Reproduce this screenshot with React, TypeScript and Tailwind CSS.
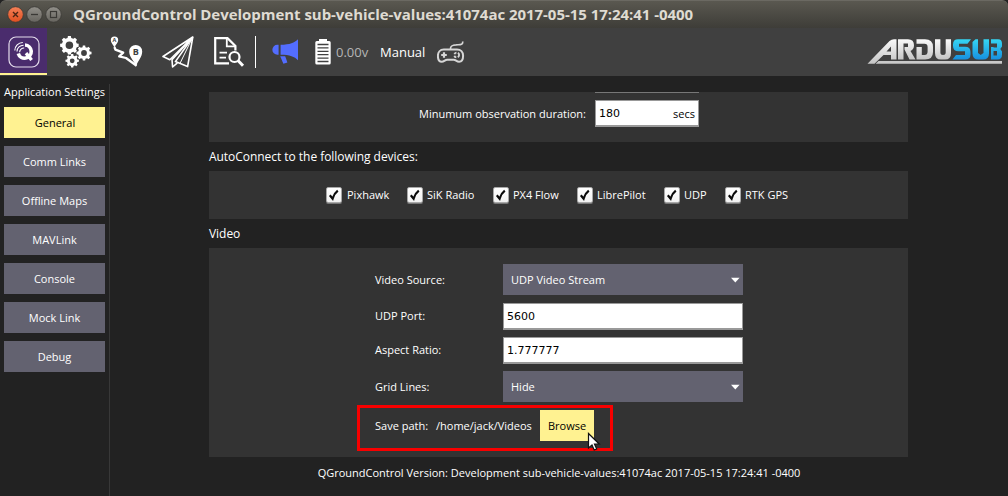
import React from "react";

const navItems = ["General", "Comm Links", "Offline Maps", "MAVLink", "Console", "Mock Link", "Debug"];

const devices = [
  { name: "Pixhawk", cls: "w-[81px] gap-[5px]" },
  { name: "SiK Radio", cls: "w-[86px] gap-1" },
  { name: "PX4 Flow", cls: "w-[84px] gap-1" },
  { name: "LibrePilot", cls: "w-[87px] gap-1" },
  { name: "UDP", cls: "w-[61px] gap-1" },
  { name: "RTK GPS", cls: "w-[66px] gap-1" },
];

function WindowButton({ kind }: { kind: "close" | "min" | "max" }) {
  const close = kind === "close";
  return (
    <svg width="17" height="17" viewBox="0 0 17 17">
      <defs>
        <linearGradient id={"wb-" + kind} x1="0" y1="0" x2="0" y2="1">
          <stop offset="0" stopColor={close ? "#f58158" : "#92908a"} />
          <stop offset="1" stopColor={close ? "#df4f20" : "#66645e"} />
        </linearGradient>
      </defs>
      <circle cx="8.5" cy="8.5" r="7.8" fill={"url(#wb-" + kind + ")"} stroke="#3a3935" strokeWidth=".8" />
      {kind === "close" && <path d="M6 6l5 5M11 6l-5 5" stroke="#4a2414" strokeWidth="1.4" />}
      {kind === "min" && <path d="M5 8.5h7" stroke="#3a3935" strokeWidth="1.3" />}
      {kind === "max" && <rect x="5.500" y="5.500" width="6" height="6" fill="none" stroke="#3a3935" strokeWidth="1.2" />}
    </svg>
  );
}

function QLogo() {
  return (
    <svg width="32" height="32" viewBox="0 0 32 32" fill="none">
      <rect x="1" y="1" width="30" height="30" rx="7" stroke="#e4dcec" strokeWidth="1.2" />
      <path d="M17 9a6.600 6.600 0 1 1-6.700 8.400" stroke="#fff" strokeWidth="3.600" />
      <path d="M18 17.200l5.600 6.800" stroke="#fff" strokeWidth="3.400" />
      <path d="M6.800 14.500a8 8 0 0 1 8-8M9 15.400a6.400 6.400 0 0 1 6.600-6.200M11.600 16.200a4.400 4.400 0 0 1 4.600-4.200" stroke="#fff" strokeWidth="1.100" />
    </svg>
  );
}

function toothedRing(cx: number, cy: number, outer: number, inner: number, teeth: number, hole: number) {
  const pts: string[] = [];
  const step = (Math.PI * 2) / teeth;
  for (let i = 0; i < teeth; i++) {
    const a = i * step - Math.PI / 2;
    [[-0.31, inner], [-0.2, outer], [0.2, outer], [0.31, inner]].forEach(([o, r]) => {
      pts.push((cx + Math.cos(a + o * step) * r).toFixed(2) + " " + (cy + Math.sin(a + o * step) * r).toFixed(2));
    });
  }
  return `M${pts.join("L")}ZM${cx - hole} ${cy}a${hole} ${hole} 0 1 0 ${hole * 2} 0a${hole} ${hole} 0 1 0 ${-hole * 2} 0Z`;
}

function Gears() {
  return (
    <svg width="32" height="32" viewBox="0 0 32 32" fill="#fff" fillRule="evenodd">
      <path d={toothedRing(9.4, 9.3, 9.4, 7.6, 8, 3.8)} />
      <path d={toothedRing(24, 17, 7.6, 6, 8, 2.9)} />
      <path d={toothedRing(12.2, 24.8, 6.8, 5.3, 8, 2.4)} />
    </svg>
  );
}

function PlanIcon() {
  return (
    <svg width="34" height="32" viewBox="0 0 34 32">
      <path d="M4.400 11L5.400 13.600L13.200 16.600L9.200 20.400L16 22L26.600 29.800" fill="none" stroke="#fff" strokeWidth="2.300" strokeLinejoin="round" />
      <path d="M4.400 11.500C3.200 8.600 .8 6.800 .8 4.200a3.700 3.700 0 0 1 7.400 0C8.200 6.800 5.600 8.600 4.400 11.500Z" fill="#fff" />
      <text x="4.500" y="6.300" fontSize="5.500" fontWeight="700" textAnchor="middle" fill="#404040" fontFamily="Open Sans, sans-serif">A</text>
      <path d="M26 30.500C24.200 24.600 19.200 21 19.200 15.400a6.500 6.500 0 0 1 13 0C32.200 21 27.800 24.600 26 30.500Z" fill="#fff" />
      <text x="25.800" y="18.800" fontSize="9" fontWeight="700" textAnchor="middle" fill="#404040" fontFamily="Open Sans, sans-serif">B</text>
    </svg>
  );
}

function PlaneIcon() {
  return (
    <svg width="32" height="32" viewBox="0 0 32 32" fill="none" stroke="#fff" strokeWidth="1.600" strokeLinejoin="round">
      <path d="M30.800 1L1 20.500L7.800 23.800L30.800 1L13.400 25.600L25.600 30.600L30.800 1" />
      <path d="M30.800 1L10 23.600L10.600 31L15.400 26.800" />
      <path d="M30.800 1L18 27.400" strokeWidth="1" />
    </svg>
  );
}

function AnalyzeIcon() {
  return (
    <svg width="32" height="32" viewBox="0 0 32 32" fill="none" stroke="#fff" strokeWidth="2.200">
      <path d="M16 27.400H2.200V2.200H14.500L22.400 10V14.500" />
      <path d="M13.800 2.200V10.400H22" strokeWidth="1.800" />
      <path d="M6.500 16.700H14M6.500 21.600H13" strokeWidth="1.800" />
      <circle cx="21.500" cy="21" r="5" />
      <path d="M25 24.500L30 29.800" strokeWidth="3" />
    </svg>
  );
}

function Megaphone() {
  return (
    <svg width="26" height="25" viewBox="0 0 26 25" fill="#536dff">
      <path d="M26 .2V21.200C22.500 17.800 18 15.800 8.600 15.800V5.700C18 5.700 22.500 3.600 26 .2Z" />
      <path d="M6.600 5.700V15.800H5.400a5.050 5.050 0 0 1 0-10.100Z" />
      <path d="M8.200 17.300H13.200L15.400 23.400L11.400 24.800Z" />
    </svg>
  );
}

function Battery() {
  return (
    <svg width="16" height="26" viewBox="0 0 16 26">
      <path d="M4 0h8v2h2.200a1.500 1.500 0 0 1 1.500 1.500V24a1.500 1.500 0 0 1-1.500 1.500H1.800A1.500 1.500 0 0 1 .3 24V3.500A1.500 1.500 0 0 1 1.800 2H4Z" fill="#fff" />
      <path d="M2.500 5.500h11M2.500 8.900h11M2.500 12.300h11M2.500 15.700h11M2.500 19.100h11M2.500 22.500h11" stroke="#404040" strokeWidth="1.300" />
    </svg>
  );
}

function Gamepad() {
  return (
    <svg width="28" height="23" viewBox="0 0 28 23" fill="none" stroke="#d6d6d6">
      <path d="M25.800 .4C25.800 4.400 23 3.600 19.200 3.800C15 3.900 13.400 5 13.400 8.400" strokeWidth="1.700" />
      <path d="M6.800 8.500H20C23.700 8.500 26.100 11.200 26.100 14.800C26.100 18.400 24.600 20.800 22.100 20.800C19.600 20.800 18.700 18.800 16.700 18.800H10.100C8.100 18.800 7.200 20.800 4.700 20.800C2.200 20.800 .9 18.400 .9 14.800C.9 11.200 3.100 8.500 6.800 8.500Z" strokeWidth="2" />
      <path d="M4.200 14H9.800M7 11.200V16.800" strokeWidth="2.200" />
      <circle cx="19.700" cy="14" r="2.400" strokeWidth="1.900" strokeDasharray="2.400 1.370" />
    </svg>
  );
}

function ArduSubLogo() {
  return (
    <svg width="136" height="26" viewBox="0 0 136 26">
      <defs>
        <linearGradient id="silver" x1="0" y1="0" x2="0" y2="1">
          <stop offset="0" stopColor="#fafafa" />
          <stop offset="1" stopColor="#c4c4c4" />
        </linearGradient>
        <linearGradient id="sea" x1="0" y1="0" x2="0" y2="1">
          <stop offset="0" stopColor="#35d6f3" />
          <stop offset="1" stopColor="#178fdf" />
        </linearGradient>
      </defs>
      <path d="M.5 24.800L22.500 2Q24.500 .2 27 .2H29.500V20.600H24V16H16.500L7.500 24.800ZM19.500 12.500H24V7.500Z" fill="url(#silver)" fillRule="evenodd" />
      <path d="M11.500 22H135V24.800H8.700Z" fill="#c9c9c9" />
      <path d="M31 .2H41Q47 .2 47 6.300Q47 10.500 43.500 12L48.500 20.600H42.500L37.500 10.500V8H41V4.500H36.500V20.600H31Z" fill="url(#silver)" />
      <path d="M49.500 .2H58Q66 .2 66 8V13Q66 20.600 58 20.600H49.500V8H54.800V16H57.500Q60.600 16 60.600 12.500V8Q60.600 4.700 57.500 4.700H49.500Z" fill="url(#silver)" />
      <path d="M68 .2H73.400V13.500Q73.400 16 76 16Q78.700 16 78.700 13.500V.2H84V14Q84 20.600 78 20.600H74Q68 20.600 68 14Z" fill="url(#silver)" />
      <path d="M91 .2H104L100.500 4.700H92V7.800H98Q103.500 7.800 103.500 13V15.500Q103.500 20.600 98 20.600H85.500L89 16H98V12.300H91.500Q86 12.300 86 7V5.500Q86 .2 91 .2Z" fill="url(#sea)" />
      <path d="M105.500 3L108.500 .2H111V14L113.700 16L116.500 14V.2H122V14.500Q122 20.600 116 20.600H111.500Q105.500 20.600 105.500 14.500Z" fill="url(#sea)" />
      <path d="M124 .2H131Q135 .2 135 4.500V7.500L133.300 10L135 12.500V15.500Q135 20.600 130.500 20.600H124V8H126.500V16.400H130V12H126.500V8.400H130V4.600H124Z" fill="url(#sea)" />
    </svg>
  );
}

function CheckBox() {
  return (
    <span className="h-4 w-4 shrink-0 rounded-[2px] border border-[#a8a8a8] bg-gradient-to-b from-white to-[#f1f1f1] shadow-[0_1px_0_#777]">
      <svg width="14" height="14" viewBox="0 0 14 14">
        <path d="M2.800 7.200L5.600 10.600C6.600 7.300 8.200 4.700 10.800 2.700" fill="none" stroke="#0a0a0a" strokeWidth="2.200" />
      </svg>
    </span>
  );
}

function Field({ value }: { value: string }) {
  return (
    <div className="flex h-[27px] w-60 items-center border border-b-2 border-[#999] bg-white pl-[3px] pt-[2px] font-[DejaVu_Sans,sans-serif] text-[11px] text-black">
      {value}
    </div>
  );
}

function Combo({ value }: { value: string }) {
  return (
    <div className="flex h-[31px] w-60 items-center justify-between bg-[#636270] pl-2 pr-[3px]">
      <span>{value}</span>
      <svg width="9" height="6" viewBox="0 0 9 6"><path d="M0 .8H8.600L4.300 5.600Z" fill="#fff" /></svg>
    </div>
  );
}

function Row({ label, gap, lift, children }: { label: string; gap: string; lift?: boolean; children: React.ReactNode }) {
  return (
    <div className={"flex items-center " + gap}>
      <span className={"w-32 " + (lift ? "pb-px" : "")}>{label}</span>
      {children}
    </div>
  );
}

export default function App() {
  return (
    <div className="relative flex h-[496px] w-[1008px] flex-col overflow-hidden whitespace-nowrap bg-[#222] font-[Open_Sans,sans-serif] text-[11px] leading-4 text-white">
      <header className="flex h-7 items-center rounded-t-md border-t border-[#6b6962] bg-gradient-to-b from-[#5a5850] to-[#3e3d38] pl-[7px]">
        <div className="flex gap-[2px]">
          <WindowButton kind="close" />
          <WindowButton kind="min" />
          <WindowButton kind="max" />
        </div>
        <h1 className="ml-[11px] pb-[2px] text-[15px] font-bold leading-5 tracking-[-0.04px] text-[#dfdbd2]">QGroundControl Development sub-vehicle-values:41074ac 2017-05-15 17:24:41 -0400</h1>
      </header>

      <div className="flex h-12 shrink-0 items-start bg-[#404040]">
        <div className="flex h-[47px] w-[47px] justify-center border-b-2 border-[#fff291] bg-[#4a2c6d] pl-px pt-2"><QLogo /></div>
        <div className="ml-[13px] mt-2"><Gears /></div>
        <div className="ml-[18px] mt-2"><PlanIcon /></div>
        <div className="ml-[18px] mt-2"><PlaneIcon /></div>
        <div className="ml-[19px] mt-2"><AnalyzeIcon /></div>
        <div className="ml-[10px] mt-2 h-8 w-px bg-white" />
        <div className="ml-4 mt-[11px]"><Megaphone /></div>
        <div className="ml-[17px] mt-[11px]"><Battery /></div>
        <span className="ml-[5px] mt-4 w-11 text-[13px] text-[#b5b5b5]">0.00v</span>
        <span className="mt-4 w-[57px] text-[13px]">Manual</span>
        <div className="mt-[13px]"><Gamepad /></div>
        <div className="ml-auto mr-[5px] mt-[11px]"><ArduSubLogo /></div>
      </div>

      <div className="flex min-h-0 flex-1">
        <aside className="flex w-[109px] flex-col pl-1 pt-2">
          <span className="mb-[7px]">Application Settings</span>
          <nav className="flex w-[101px] flex-col gap-2">
            {navItems.map((n, i) => (
              <div key={n} className={"flex h-[31px] items-center justify-center " + (i === 0 ? "bg-[#fff291] pl-px text-black" : "bg-[#636270]")}>{n}</div>
            ))}
          </nav>
        </aside>
        <div className="mt-2 w-px bg-[#383838]" />

        <main className="ml-[99px] flex w-[699px] flex-col pt-4">
          <section className="flex h-[50px] items-start bg-[#333]">
            <span className="ml-[210px] mt-[14px] w-44">Minumum observation duration:</span>
            <div className="flex w-[104px] flex-col gap-[7px]">
              <div className="h-px bg-[#777]" />
              <div className="flex h-[27px] items-center justify-between border border-b-2 border-[#999] bg-white pl-[3px] pr-[3px] pt-[2px] text-black">
                <span className="font-[DejaVu_Sans,sans-serif]">180</span>
                <span>secs</span>
              </div>
            </div>
          </section>
          <h2 className="mb-[6px] mt-[7px] text-[12px] leading-4 tracking-[-0.04px]">AutoConnect to the following devices:</h2>
          <section className="flex h-12 items-center bg-[#333] pl-[117px]">
            {devices.map((d) => (
              <label key={d.name} className={"flex items-center " + d.cls}>
                <CheckBox />
                {d.name}
              </label>
            ))}
          </section>
          <h2 className="mb-[6px] mt-[7px] text-[12px] leading-4 tracking-[-0.04px]">Video</h2>
          <section className="h-[209px] bg-[#333] pl-[166px] pt-4">
            <Row label="Video Source:" gap=""><Combo value="UDP Video Stream" /></Row>
            <Row label="UDP Port:" gap="mt-2" lift><Field value="5600" /></Row>
            <Row label="Aspect Ratio:" gap="mt-[7px]" lift><Field value="1.777777" /></Row>
            <Row label="Grid Lines:" gap="mt-[7px]"><Combo value="Hide" /></Row>
            <div className="mt-2 flex items-center">
              <span className="w-[61px]">Save path:</span>
              <span className="w-[104px]">/home/jack/Videos</span>
              <div className="flex h-[31px] w-[54px] items-center justify-center bg-[#fff291] text-black">Browse</div>
            </div>
          </section>
          <footer className="mt-2 pl-px text-center">QGroundControl Version: Development sub-vehicle-values:41074ac 2017-05-15 17:24:41 -0400</footer>
        </main>
      </div>

      <div className="absolute left-[357px] top-[405px] h-[46px] w-[256px] border-[3px] border-[#f80000]" />
      <svg className="absolute left-[587px] top-[432px]" width="14" height="20" viewBox="0 0 14 20">
        <path d="M1.500 1.500V16L5 12.900L7.200 18L9.700 17L7.500 12H12.200Z" fill="#fff" stroke="#111" strokeWidth="1.200" />
      </svg>
    </div>
  );
}
